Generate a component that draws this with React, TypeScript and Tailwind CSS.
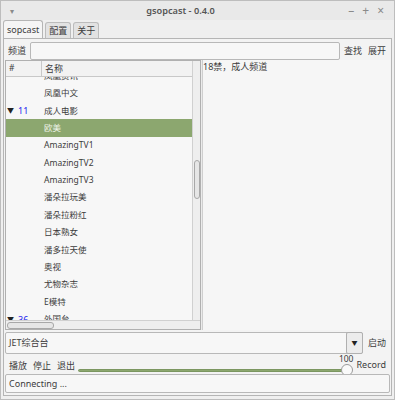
import React from "react";

const font = { fontFamily: '"Noto Sans", "Noto Sans CJK SC", sans-serif' };

type Row = { name: string; num?: string; open?: boolean; selected?: boolean };

const rows: Row[] = [
  { name: "凤凰资讯" },
  { name: "凤凰中文" },
  { name: "成人电影", num: "11", open: true },
  { name: "欧美", selected: true },
  { name: "AmazingTV1" },
  { name: "AmazingTV2" },
  { name: "AmazingTV3" },
  { name: "潘朵拉玩美" },
  { name: "潘朵拉粉红" },
  { name: "日本熟女" },
  { name: "潘多拉天使" },
  { name: "奥视" },
  { name: "尤物杂志" },
  { name: "E模特" },
  { name: "外国台", num: "36", open: true },
];

export default function App() {
  return (
    <div
      style={font}
      className="w-[395px] h-[400px] bg-[#bdbdbd] p-[1px] text-[#3c3c3c] text-[8.5px] leading-none"
    >
      <div className="w-full h-full bg-[#efefef] flex flex-col">
        {/* title bar */}
        <div className="h-[19px] flex items-center px-[9px] bg-[#e9e9e9] shrink-0">
          <span className="text-[#8a8a8a] text-[8px] w-[40px]">▾</span>
          <span className="flex-1 text-center text-[9.2px] font-semibold text-[#555] pr-[34px]">gsopcast - 0.4.0</span>
          <div className="flex gap-[8px] text-[#8a8a8a] text-[12px] w-[40px] justify-end pr-[1px]">
            <span>–</span>
            <span>+</span>
            <span>×</span>
          </div>
        </div>

        {/* tabs */}
        <div className="flex items-end px-[2px] h-[18px] shrink-0 gap-[2px]">
          <div className="h-[18px] px-[3px] flex items-center border border-b-0 border-[#b5b5b5] bg-[#f5f5f5] rounded-t-[3px] text-[9px]">sopcast</div>
          <div className="h-[16px] px-[3px] flex items-center border border-b-0 border-[#bcbcbc] bg-[#e2e2e2] rounded-t-[3px] text-[9px]">配置</div>
          <div className="h-[16px] px-[3px] flex items-center border border-b-0 border-[#bcbcbc] bg-[#e2e2e2] rounded-t-[3px] text-[9px]">关于</div>
        </div>

        {/* main notebook page */}
        <div className="flex-1 mx-[2px] border border-[#b5b5b5] bg-[#f3f3f3] flex flex-col pt-[2px] px-[1px] pb-[1px]">
          <div className="flex items-center h-[19px] pr-[4px]">
            <span className="pl-[3px] w-[25px] text-[9px]">频道</span>
            <div className="flex-1 h-[18px] bg-[#f7f7f7] border border-[#b8b8b8] rounded-[2px]" />
            <span className="ml-[4px] text-[9px]">查找</span>
            <span className="ml-[6px] text-[9px]">展开</span>
          </div>

          <div className="flex h-[270px]">
            {/* tree */}
            <div className="w-[196px] flex flex-col border border-[#b0b0b0] bg-[#f7f7f7]">
              <div className="flex flex-1 min-h-0">
                <div className="flex-1 flex flex-col min-w-0">
                  <div className="h-[16px] flex items-center border-b border-[#c8c8c8] bg-[#f2f2f2] shrink-0">
                    <div className="w-[36px] pl-[3px] border-r border-[#c8c8c8] h-full flex items-center">#</div>
                    <div className="pl-[3px] text-[9px]">名称</div>
                  </div>
                  <div className="flex-1 overflow-hidden">
                    <div className="mt-[-9.7px]">
                      {rows.map((r, i) => (
                        <div
                          key={i}
                          className={
                            r.selected
                              ? "h-[17.4px] flex items-center bg-[#8ca76f] text-[#eef3e8]"
                              : "h-[17.4px] flex items-center"
                          }
                        >
                          <div className="w-[38px] flex items-center pl-[1px]">
                            {r.open ? <span className="text-[7px] text-[#222] w-[11px]">▼</span> : <span className="w-[11px]" />}
                            {r.num ? <span className="text-[#2222ee] text-[9px]">{r.num}</span> : null}
                          </div>
                          <span>{r.name}</span>
                        </div>
                      ))}
                    </div>
                  </div>
                </div>
                {/* vertical scrollbar */}
                <div className="w-[8px] border-l border-[#d0d0d0] bg-[#eeeeee] pt-[99px] flex justify-center">
                  <div className="w-[6px] h-[39px] rounded-[3px] border border-[#a8a8a8] bg-[#e6e6e6]" />
                </div>
              </div>
              <div className="h-[9px] flex items-center pl-[1px] border-t border-[#d0d0d0] bg-[#eeeeee] shrink-0">
                <div className="w-[47px] h-[7px] rounded-[3px] border border-[#a8a8a8] bg-[#e6e6e6]" />
              </div>
            </div>
            {/* pane handle */}
            <div className="w-[2px] bg-[#ebebeb] border-r border-[#cfcfcf]" />
            {/* right pane */}
            <div className="flex-1 bg-[#f6f6f6] pt-[2px] pl-[0px] text-[9px]">18禁，成人频道</div>
          </div>

          {/* combo */}
          <div className="flex items-center h-[23px] mt-[1px] pr-[4px]">
            <div className="flex-1 h-[22px] flex border border-[#b8b8b8] rounded-[2px] bg-[#f7f7f7]">
              <div className="flex-1 flex items-center pl-[3px] text-[9px]">JET综合台</div>
              <div className="w-[17px] border border-[#b0b0b0] rounded-[2px] bg-[#ececec] flex items-center justify-center text-[6px] text-[#222] -m-[1px]">▼</div>
            </div>
            <span className="ml-[5px] text-[9px]">启动</span>
          </div>

          {/* controls */}
          <div className="flex items-end h-[20px] pr-[4px]">
            <div className="flex gap-[6px] pl-[4px] pb-[4px] text-[9px]">
              <span>播放</span>
              <span>停止</span>
              <span>退出</span>
            </div>
            <div className="flex-1 ml-[3px] flex flex-col -mb-[2px]">
              <div className="text-right text-[8.5px] mb-[1px]">100</div>
              <div className="flex items-center h-[12px]">
                <div className="flex-1 h-[3px] bg-[#8ca76f] rounded-full border border-[#7b9660]" />
                <div className="w-[12px] h-[12px] rounded-full bg-[#fafafa] border border-[#9a9a9a] -ml-[2px]" />
              </div>
            </div>
            <span className="ml-[3px] pb-[5px] text-[9px]">Record</span>
          </div>

          {/* status */}
          <div className="h-[19px] border border-[#b8b8b8] rounded-[2px] bg-[#f7f7f7] flex items-center pl-[3px] text-[9px]">Connecting ...</div>
        </div>
        <div className="h-[3px]" />
      </div>
    </div>
  );
}
